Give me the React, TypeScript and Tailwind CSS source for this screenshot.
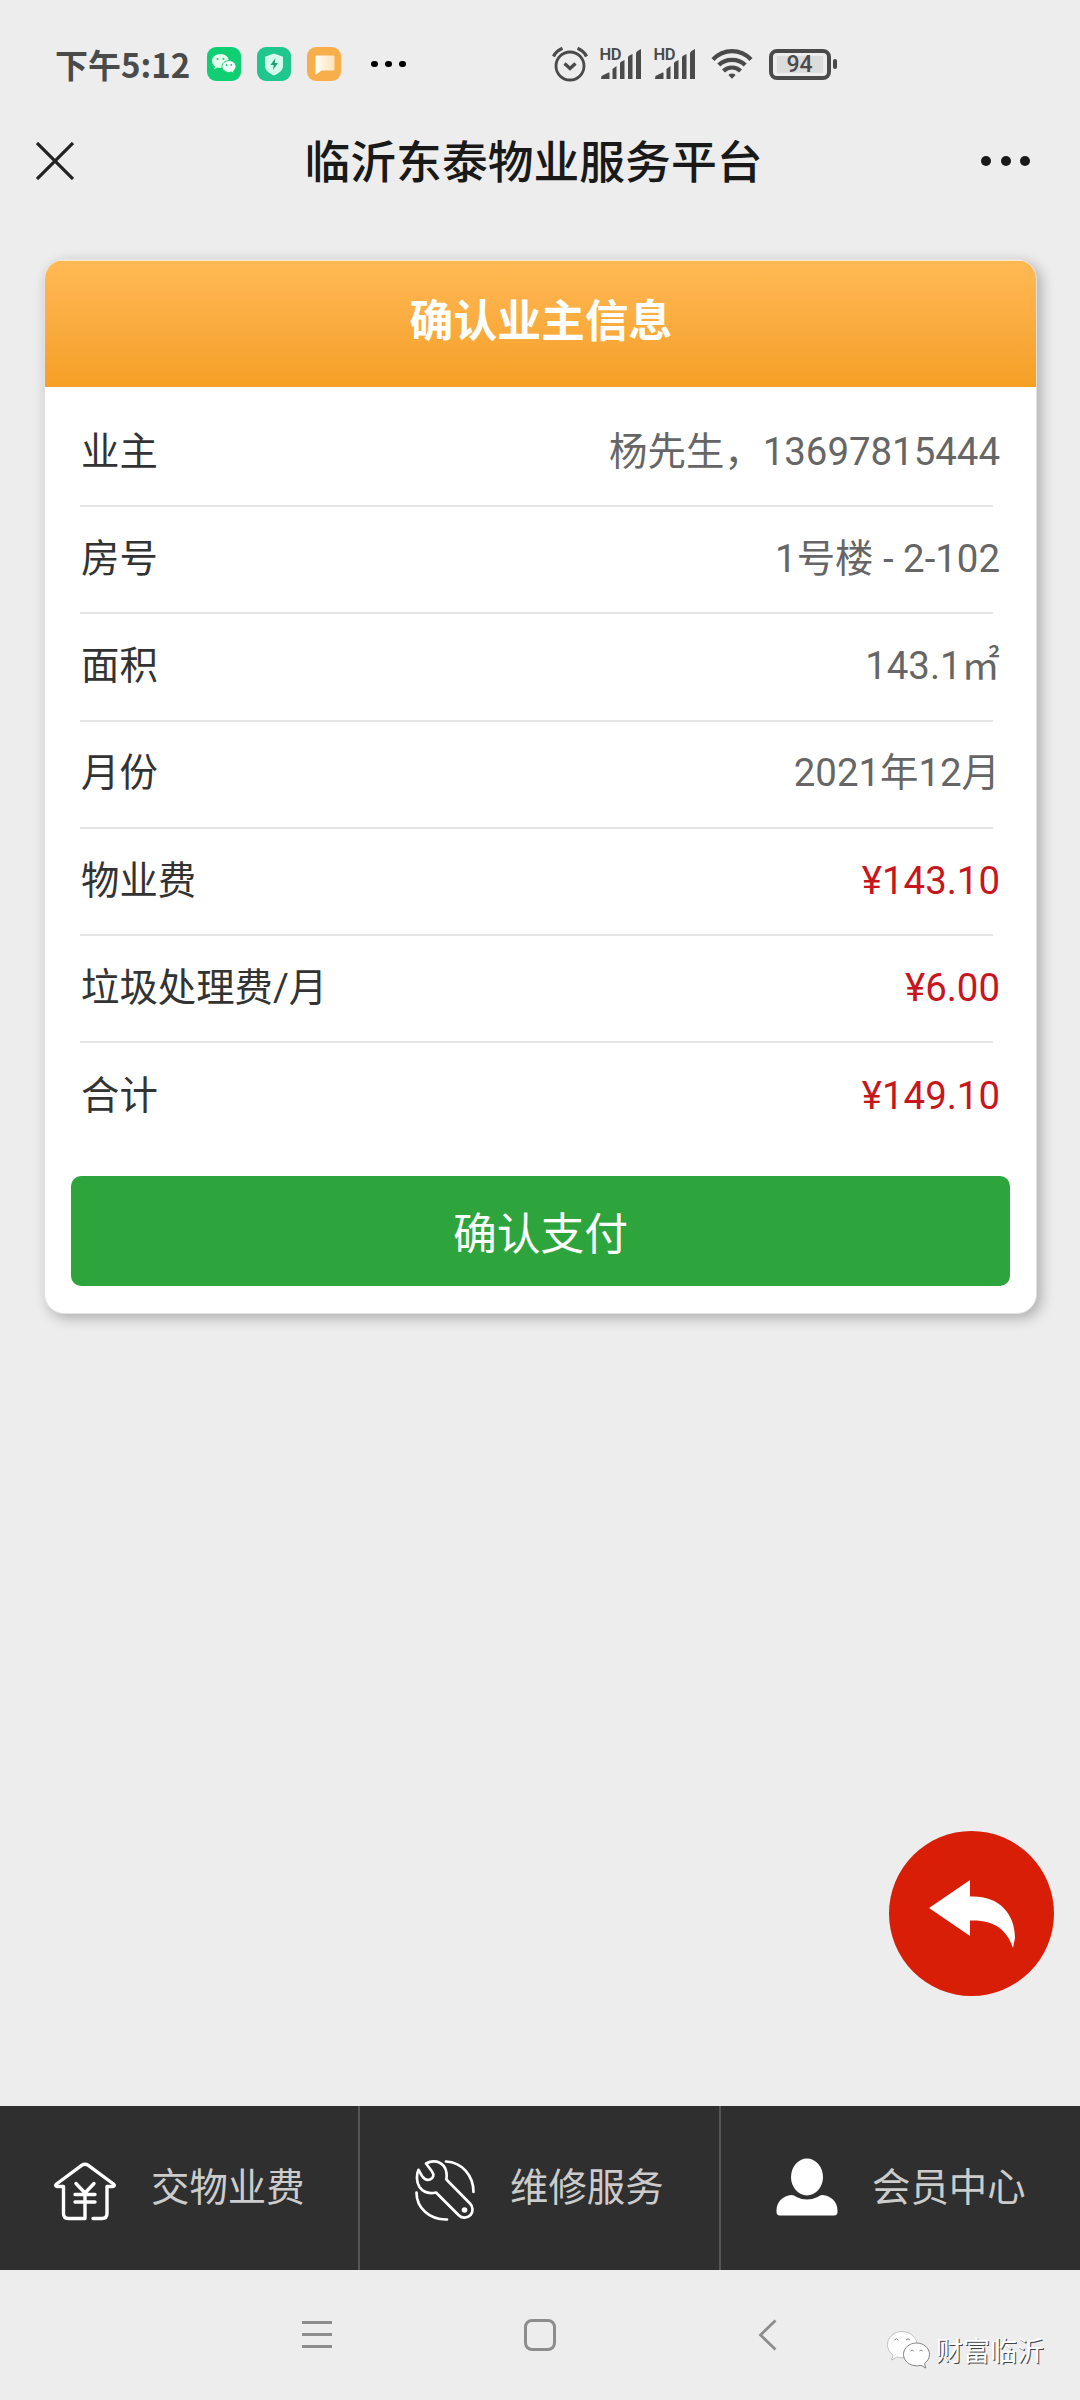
import clsx from "clsx";

const rows = [
  { label: "业主", value: "杨先生，13697815444" },
  { label: "房号", value: "1号楼 - 2-102" },
  { label: "面积", value: "143.1㎡" },
  { label: "月份", value: "2021年12月" },
  { label: "物业费", value: "¥143.10", price: true },
  { label: "垃圾处理费/月", value: "¥6.00", price: true },
  { label: "合计", value: "¥149.10", price: true },
];

function WechatIcon() {
  return (
    <svg width="34" height="34" viewBox="0 0 34 34">
      <rect width="34" height="34" rx="9" fill="#10cf72" />
      <path
        d="M13.5 7C8.8 7 5 10 5 14c0 2.200 1.200 4.100 3 5.400l-.8 2.800 3.200-1.600c1 .3 2 .4 3.100.4 4.700 0 8.300-3 8.300-7S18.200 7 13.500 7z"
        fill="#e4fff0"
      />
      <path
        d="M22 13.600c3.900 0 7 2.600 7 5.900 0 1.800-1 3.400-2.500 4.500l.6 2.500-2.700-1.400c-.8.200-1.600.3-2.400.3-3.900 0-7-2.600-7-5.900s3.100-5.900 7-5.900z"
        fill="#f3fff8"
        stroke="#10cf72"
        strokeWidth="1"
      />
      <g fill="#10cf72">
        <circle cx="10.500" cy="12" r="1" />
        <circle cx="16.500" cy="12" r="1" />
        <circle cx="19.700" cy="18" r=".9" />
        <circle cx="24.300" cy="18" r=".9" />
      </g>
    </svg>
  );
}

function ShieldIcon() {
  return (
    <svg width="34" height="34" viewBox="0 0 34 34">
      <rect width="34" height="34" rx="9" fill="#1fc68d" />
      <path
        d="M17 6.500l9 3.300v9.200c0 4.500-4.500 7.500-9 9.500-4.500-2-9-5-9-9.500V9.800z"
        fill="#d5fbee"
      />
      <path d="M18.500 11l-5 7h3.200l-.8 5 5-7h-3.200z" fill="#16a577" />
    </svg>
  );
}

function MessageIcon() {
  return (
    <svg width="34" height="34" viewBox="0 0 34 34">
      <defs>
        <linearGradient id="msg" x1="0" y1="0" x2="1" y2="0">
          <stop offset="0" stopColor="#fffdf5" />
          <stop offset="1" stopColor="#ffe3b8" />
        </linearGradient>
      </defs>
      <rect width="34" height="34" rx="9" fill="#f8ae4b" />
      <path
        d="M9.500 8.500h17a1 1 0 0 1 1 1v13a1 1 0 0 1-1 1H14.500L8.500 28V9.500a1 1 0 0 1 1-1z"
        fill="url(#msg)"
      />
    </svg>
  );
}

function AlarmIcon() {
  return (
    <svg
      width="36"
      height="36"
      viewBox="0 0 36 36"
      fill="none"
      stroke="#4a4a4a"
      strokeWidth="2.800"
    >
      <circle cx="18" cy="20" r="14" />
      <path
        d="M12.500 17.500l5.500 5 5.500-5M1.500 10.500Q4 5 10.500 2.300M34.500 10.500Q32 5 25.500 2.300"
        strokeWidth="3.300"
      />
    </svg>
  );
}

function SignalIcon() {
  return (
    <div className="relative">
      <svg width="42" height="32" viewBox="0 0 42 32" fill="#4a4a4a">
        <path d="M1 31l.5-3L8.500 24.500q1-.4 1 .6V31z" />
        <path d="M12.500 21l4-3v13h-4zM20 15.500q0-1.500 1.500-2l3-1.500v19H20zM28 9.500q0-1.500 1.500-2l3-1.500v25H28zM36 5.500q0-1.500 1.500-2.500L41 1v30h-5z" />
      </svg>
      <span className="absolute -top-[1.500px] left-0 text-[16.500px] leading-4 font-semibold tracking-tight">
        HD
      </span>
    </div>
  );
}

function WifiIcon() {
  return (
    <svg
      width="42"
      height="32"
      viewBox="0 0 42 32"
      fill="none"
      stroke="#4a4a4a"
      strokeWidth="4.200"
    >
      <path d="M2 11.500Q10 3.200 21 3.200T40 11.500M7.800 17Q13 11.800 21 11.800T34.200 17M12.500 23Q16 19.500 21 19.500T29.500 23" />
      <path
        d="M21 25.500c2 0 3.400.8 3.400 1.800L21 30.800l-3.400-3.500c0-1 1.400-1.800 3.400-1.800z"
        fill="#4a4a4a"
        stroke="none"
      />
    </svg>
  );
}

function StatusBar() {
  return (
    <div className="flex h-32 items-center pl-[55px] text-[#4a4a4a]">
      <div className="w-[152px] text-[33px] leading-none font-bold whitespace-nowrap font-['Noto_Sans_CJK_SC',sans-serif]">
        下午5:12
      </div>
      <div className="flex gap-4">
        <WechatIcon />
        <ShieldIcon />
        <MessageIcon />
      </div>
      <div className="ml-[30px] flex gap-[7.500px]">
        <span className="size-[6.500px] rounded-full bg-black" />
        <span className="size-[6.500px] rounded-full bg-black" />
        <span className="size-[6.500px] rounded-full bg-black" />
      </div>
      <div className="ml-[146px] flex items-center">
        <AlarmIcon />
        <div className="ml-3 flex gap-3">
          <SignalIcon />
          <SignalIcon />
        </div>
        <div className="ml-[15px]">
          <WifiIcon />
        </div>
        <div className="ml-4 flex h-[31px] w-[62px] items-center justify-center rounded-[8px] border-4 border-[#4a4a4a]">
          <span className="w-[46px] bg-[#dcdcdc] text-center text-[23px] leading-[17px] font-medium">
            94
          </span>
        </div>
        <span className="ml-0.5 h-2.5 w-1 rounded-full bg-[#4a4a4a]" />
      </div>
    </div>
  );
}

function TitleBar() {
  return (
    <div className="flex h-[66px] items-center justify-between pr-[50px] pl-9 text-[#191919]">
      <svg
        width="38"
        height="38"
        viewBox="0 0 38 38"
        stroke="#222"
        strokeWidth="3.200"
      >
        <path d="M1 1l36 36M37 1L1 37" />
      </svg>
      <h1 className="ml-[12px] pt-[5px] text-[45.800px] leading-none font-medium">
        临沂东泰物业服务平台
      </h1>
      <div className="flex gap-[9.500px]">
        <span className="size-2.5 rounded-full bg-[#191919]" />
        <span className="size-2.5 rounded-full bg-[#191919]" />
        <span className="size-2.5 rounded-full bg-[#191919]" />
      </div>
    </div>
  );
}

function OwnerCard() {
  return (
    <div className="mr-[43px] ml-11 mt-[65px] h-[1055px] overflow-hidden rounded-[20px] border border-[#e3e3e3] bg-white shadow-[4px_4px_14px_rgba(0,0,0,0.28)]">
      <div className="flex h-[127px] items-center justify-center border-t border-[#ffe9c4] bg-linear-to-b from-[#ffb954] to-[#f59f24] pb-0.5 pl-px text-[43.800px] font-bold text-white">
        确认业主信息
      </div>
      <div className="mr-[43px] ml-[35px] pt-[13px]">
        {rows.map((row, i) => (
          <div
            key={row.label}
            className={clsx(
              "flex h-[107.200px] items-center justify-between pb-0.5 text-[38.400px]",
              i < rows.length - 1 && "border-b-2 border-[#e5e5e5]",
            )}
          >
            <span className="pl-px text-[#333]">{row.label}</span>
            <span
              className={clsx(
                "-mr-[7px]",
                row.price ? "text-[#c8161d]" : "text-[#666]",
              )}
            >
              {row.value}
            </span>
          </div>
        ))}
      </div>
      <button className="mx-[26px] mt-[26px] flex h-[110px] w-[939px] items-center justify-center rounded-[10px] bg-[#2da43c] pt-2.5 text-[43.800px] text-white">
        确认支付
      </button>
    </div>
  );
}

function HouseIcon() {
  return (
    <svg
      width="64"
      height="60"
      viewBox="0 0 64 60"
      fill="none"
      stroke="#fff"
      strokeWidth="3.400"
      strokeLinecap="round"
      strokeLinejoin="round"
    >
      <path d="M40 57.500h9q5 0 5-5V25.500h6q2.500-.8.500-2.500L35 4.200q-3-2-6 0L3.500 23q-2 1.700.5 2.500h6.500v27q0 5 5 5H32V32.500" />
      <path d="M23 22.500l9 9.500 9-9.500M22 33.500h20M22 41h20" />
    </svg>
  );
}

function WrenchIcon() {
  return (
    <svg
      width="60"
      height="62"
      viewBox="0 0 60 62"
      fill="none"
      stroke="#fff"
      strokeWidth="2.700"
      strokeLinecap="round"
      strokeLinejoin="round"
    >
      <path d="M11 4.500C18 .5 26 2 30 9c1.800 3.500 2 7 1.400 11.500L55 44.500c3 3 3.500 8 .5 11.500-3.500 3.500-8.500 3.500-11.500.500L21 33.500C14 35 8 33 4.500 28 1 22.500 1.500 15 3.500 10.800L7 17c2 3 5 4.500 8 3.500 3.500-1.500 4.500-4.500 2-8z" />
      <path d="M31 2.500c16 .5 27.500 14.500 27.500 30.500M1.500 33.500c0 15 12.500 27.500 30.500 27" />
      <circle cx="49.500" cy="51" r="2.800" fill="#fff" stroke="none" />
    </svg>
  );
}

function PersonIcon() {
  return (
    <svg width="62" height="58" viewBox="0 0 62 58" fill="#fff">
      <ellipse cx="31" cy="19" rx="16" ry="18.500" />
      <path d="M4 57.500q-4 0-3.500-5C.5 44 7 37.500 15.500 37q2.500 0 5 2 10.500 5 21 0 2.500-2 5-2C55 37.500 61.500 44 61.500 52.500q.5 5-3.500 5z" />
    </svg>
  );
}

function TabBar() {
  return (
    <div className="grid h-[164px] grid-cols-[360px_361px_359px] bg-[#2f2f2f] text-[38.400px] text-[#ccc]">
      <div className="flex items-center border-r-2 border-[#555] pl-[53px]">
        <div className="pt-1.5">
          <HouseIcon />
        </div>
        <span className="ml-[34px]">交物业费</span>
      </div>
      <div className="flex items-center border-r-2 border-[#555] pl-[55px]">
        <div className="pt-1">
          <WrenchIcon />
        </div>
        <span className="ml-[35px]">维修服务</span>
      </div>
      <div className="flex items-center pl-[55px]">
        <div className="pb-0.5">
          <PersonIcon />
        </div>
        <span className="ml-[34px]">会员中心</span>
      </div>
    </div>
  );
}

function SystemNav() {
  return (
    <div className="relative h-[130px]">
      <div className="flex items-start pt-[49px] pl-[302px]">
        <svg
          width="30"
          height="31"
          viewBox="0 0 30 31"
          stroke="#8d8d8d"
          strokeWidth="2.800"
        >
          <path d="M0 3.500h30M0 15.500h30M0 27.500h30" />
        </svg>
        <div className="ml-48 h-8 w-8 rounded-[8px] border-3 border-[#8d8d8d]" />
        <svg
          className="ml-[202px]"
          width="19"
          height="32"
          viewBox="0 0 19 32"
          fill="none"
          stroke="#8d8d8d"
          strokeWidth="2.800"
        >
          <path d="M17.500 1.500L2.500 16l15 14.500" />
        </svg>
      </div>
      {/* account watermark */}
      <div className="absolute top-[60px] left-[886px] flex items-center gap-[5px]">
        <svg
          width="45"
          height="40"
          viewBox="0 0 45 40"
          fill="#fff"
          stroke="#777"
          strokeWidth=".9"
        >
          <path
            d="M16 1.500C8 1.500 1.500 7.500 1.500 14.500c0 4.500 2 8 5.500 10.500l-1.500 5 5.500-3c2 .6 3.500.8 5 .8 8.500 0 15-6 15-13S24.500 1.500 16 1.500z"
            stroke="#bbb"
          />
          <path d="M30.500 13c7.200 0 13 5 13 11.500 0 3.500-2 6.800-5 9l1.300 4.500-4.800-2.700c-1.500.4-3 .5-4.500.5-7.200 0-13-5-13-11.400S23.300 13 30.500 13z" />
          <path
            d="M8.500 10q2-2.500 3.800 0M20 10q2-2.500 3.800 0M24.500 21q1.500-2 3.200 0M33.500 21q1.500-2 3.200 0"
            fill="none"
          />
        </svg>
        <span className="pt-1 text-[27px] leading-none text-white [text-shadow:1px_1px_0_#444]">
          财富临沂
        </span>
      </div>
    </div>
  );
}

export default function App() {
  return (
    <div className="flex h-[2400px] w-[1080px] flex-col bg-[#ededed] font-[Roboto,'Noto_Sans_CJK_SC',sans-serif]">
      <StatusBar />
      <TitleBar />
      <main className="relative flex-1">
        <OwnerCard />
        <button className="absolute right-[26px] bottom-[110px] flex size-[165px] items-center justify-center rounded-full bg-[#d81e06]">
          <svg width="86" height="68" viewBox="0 0 86 68" fill="#fff">
            <path d="M0 28L41 0v16.500C68 15 86 32 86 58l-2 10C78 49 64 39.500 41 40.500V56z" />
          </svg>
        </button>
      </main>
      <TabBar />
      <SystemNav />
    </div>
  );
}
